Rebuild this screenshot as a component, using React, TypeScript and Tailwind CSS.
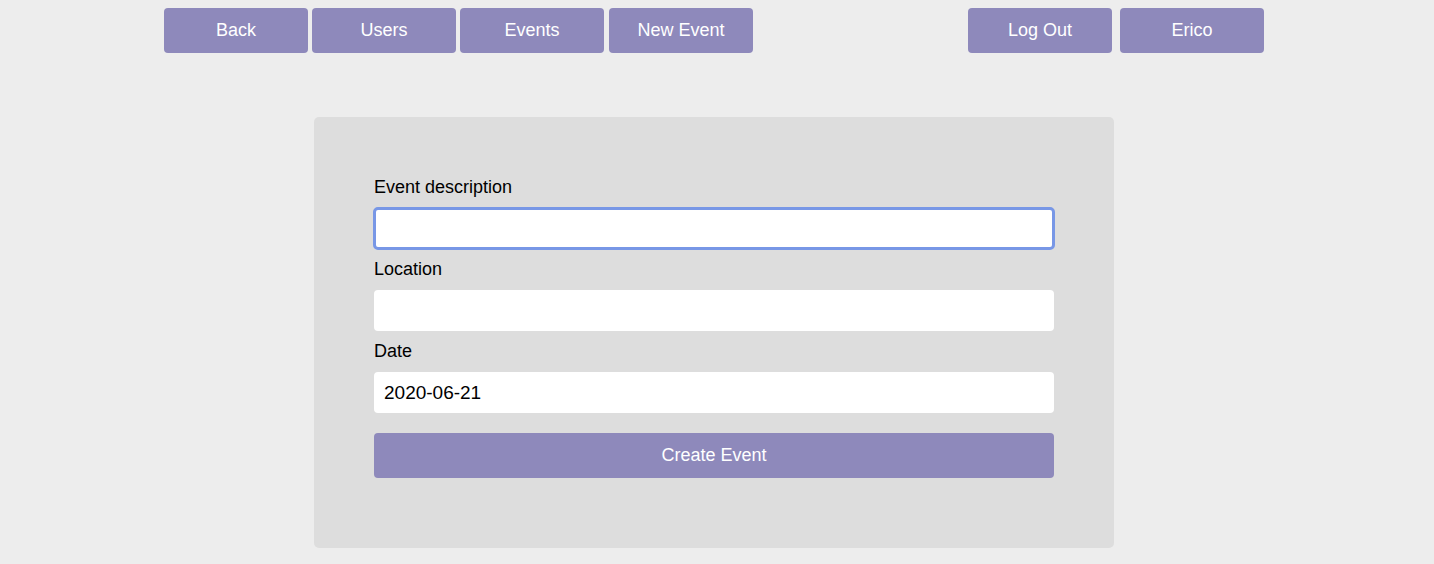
import React from "react";

const font = { fontFamily: '"Liberation Sans", Arial, Helvetica, sans-serif' };

function NavButton({ label }: { label: string }) {
  return (
    <button className="w-[144px] h-[45px] rounded-[4px] bg-[#8e89bb] text-white text-[18px] leading-none flex items-center justify-center pb-[2px]">
      {label}
    </button>
  );
}

export default function App() {
  return (
    <div className="min-h-[564px] w-full bg-[#ededed] pr-[6px]" style={font}>
      <div className="w-[1100px] mx-auto pt-[8px] flex justify-between">
        <div className="flex">
          <NavButton label="Back" />
          <div className="ml-[4px]"><NavButton label="Users" /></div>
          <div className="ml-[4px]"><NavButton label="Events" /></div>
          <div className="ml-[5px]"><NavButton label="New Event" /></div>
        </div>
        <div className="flex gap-[8px]">
          <NavButton label="Log Out" />
          <NavButton label="Erico" />
        </div>
      </div>
      <div className="w-[800px] mx-auto mt-[64px] bg-[#dddddd] rounded-[5px] px-[60px] pt-[60px] pb-[70px]">
        <div className="text-[18px] leading-[21px] text-black">Event description</div>
        <input
          type="text"
          className="mt-[10px] block w-full h-[41px] bg-white rounded-[4px] px-[10px] text-[19px] outline-[3px] outline-solid outline-[#7897e6] -outline-offset-2"
        />
        <div className="mt-[10px] text-[18px] leading-[21px] text-black">Location</div>
        <input
          type="text"
          className="mt-[10px] block w-full h-[41px] bg-white rounded-[4px] px-[10px] text-[19px] outline-none"
        />
        <div className="mt-[10px] text-[18px] leading-[21px] text-black">Date</div>
        <input
          type="text"
          defaultValue="2020-06-21"
          className="mt-[10px] block w-full h-[41px] bg-white rounded-[4px] px-[10px] text-[19px] text-black outline-none"
          style={font}
        />
        <button className="mt-[20px] w-full h-[45px] rounded-[4px] bg-[#8e89bb] text-white text-[18px] leading-none flex items-center justify-center pb-[1px]">
          Create Event
        </button>
      </div>
    </div>
  );
}
